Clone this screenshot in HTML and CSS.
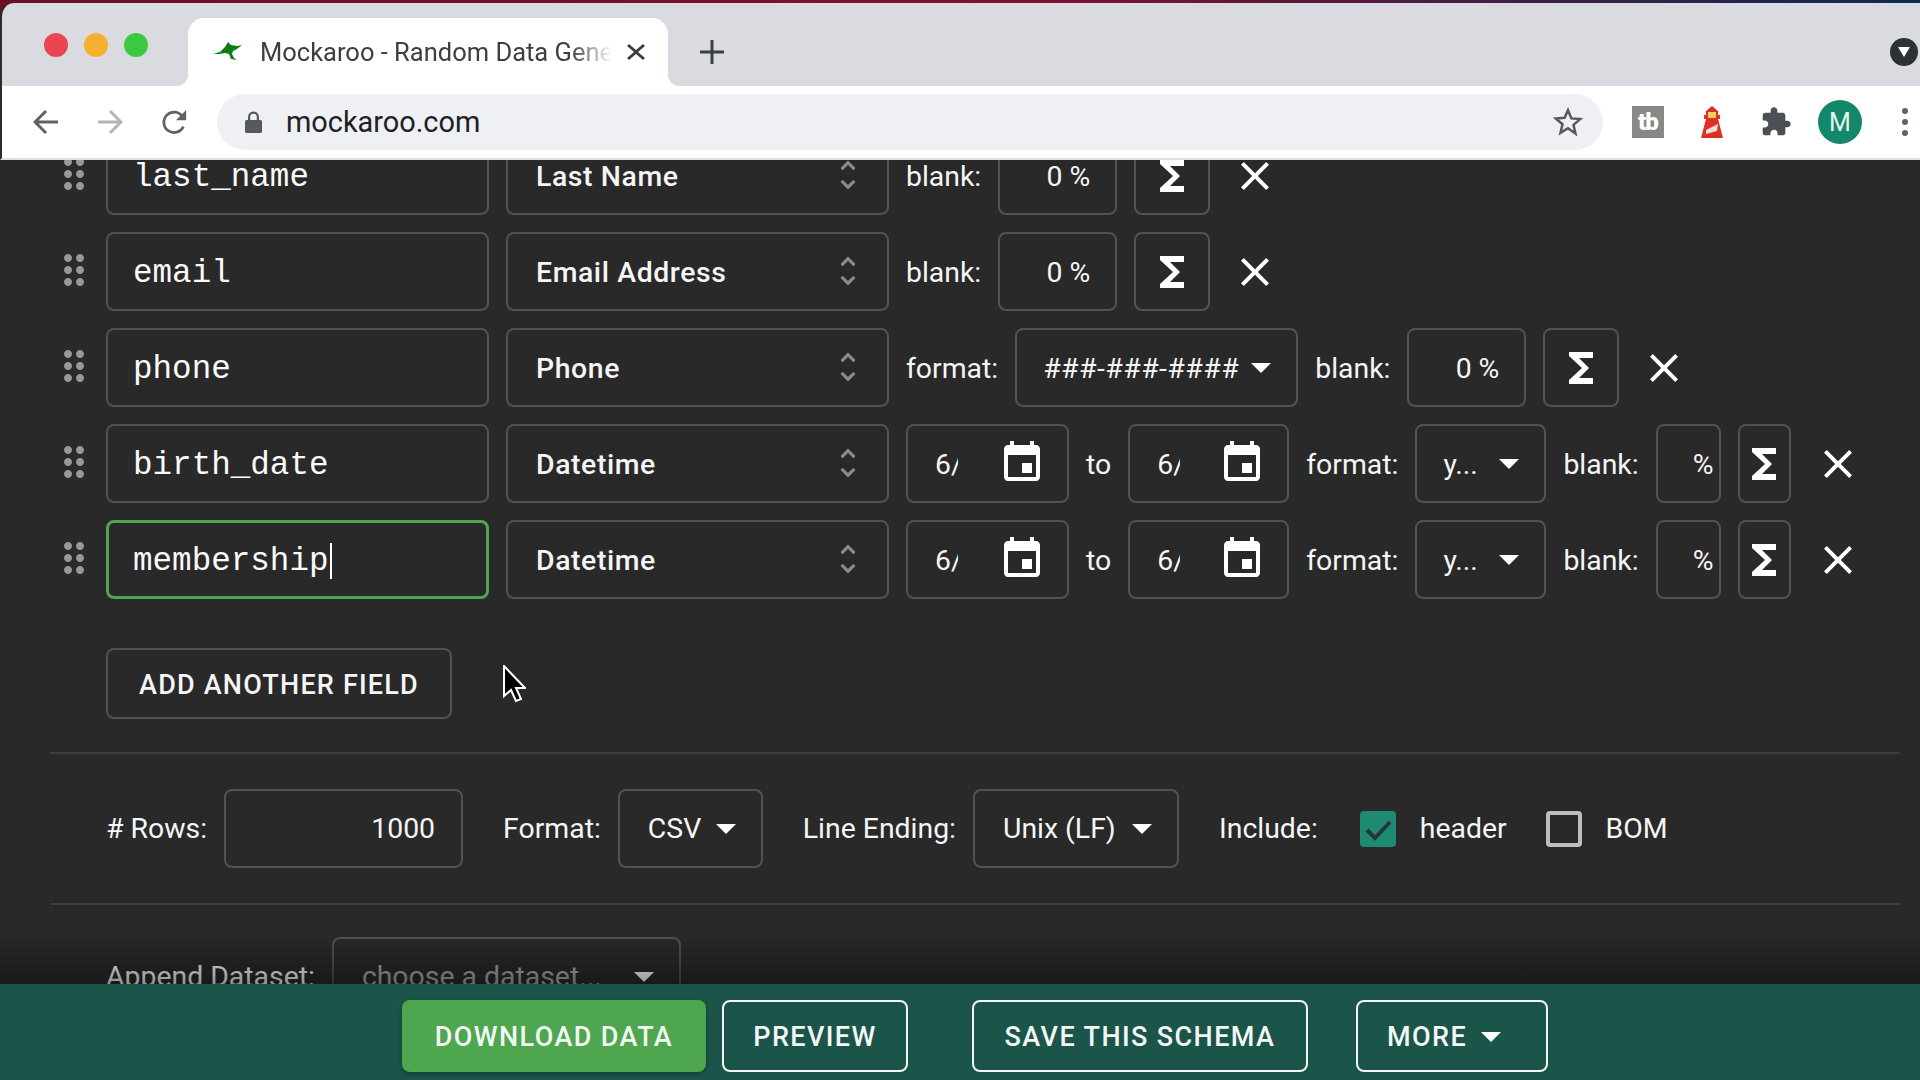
FILE: index.html
```html
<!DOCTYPE html>
<html lang="en">
<head>
    <meta charset="UTF-8">
    <title>Mockaroo - Random Data Generator</title>
    <link rel="stylesheet" href="styles.css">
</head>
<body>
    <svg class="defs" width="0" height="0">
        <symbol id="i-drag" viewBox="0 0 24 24"><path d="M11 18c0 1.1-.9 2-2 2s-2-.9-2-2 .9-2 2-2 2 .9 2 2zm-2-8c-1.1 0-2 .9-2 2s.9 2 2 2 2-.9 2-2-.9-2-2-2zm0-6c-1.1 0-2 .9-2 2s.9 2 2 2 2-.9 2-2-.9-2-2-2zm6 4c1.1 0 2-.9 2-2s-.9-2-2-2-2 .9-2 2 .9 2 2 2zm0 2c-1.1 0-2 .9-2 2s.9 2 2 2 2-.9 2-2-.9-2-2-2zm0 6c-1.1 0-2 .9-2 2s.9 2 2 2 2-.9 2-2-.9-2-2-2z"/></symbol>
        <symbol id="i-sum" viewBox="0 0 24 24"><path d="M18 4H6v2l6.5 6L6 18v2h12v-3h-7l5-5-5-5h7z"/></symbol>
        <symbol id="i-close" viewBox="0 0 24 24"><path d="M19 6.41L17.59 5 12 10.59 6.41 5 5 6.41 10.59 12 5 17.59 6.41 19 12 13.41 17.59 19 19 17.59 13.41 12z"/></symbol>
        <symbol id="i-event" viewBox="0 0 24 24"><path d="M17 12h-5v5h5v-5zM16 1v2H8V1H6v2H5c-1.11 0-1.99.9-1.99 2L3 19c0 1.1.89 2 2 2h14c1.1 0 2-.9 2-2V5c0-1.1-.9-2-2-2h-1V1h-2zm3 18H5V8h14v11z"/></symbol>
        <symbol id="i-drop" viewBox="0 0 24 24"><path d="M7 10l5 5 5-5z"/></symbol>
        <symbol id="i-unfold" viewBox="0 0 16 30"><path d="M8 0.500L0.500 8l2.200 2.200L8 4.900l5.300 5.300L15.500 8zM8 29.500l7.500-7.500-2.200-2.200L8 25.100l-5.300-5.300L0.500 22z"/></symbol>
    </svg>

    <div class="browser">
        <div class="tabstrip">
            <div class="lights">
                <span class="light red"></span>
                <span class="light amber"></span>
                <span class="light green"></span>
            </div>
            <div class="tab">
                <svg class="favicon" viewBox="0 0 30 20"><path d="M0 12l7-2 5-5 3-5 3 3 6 1 5-1-5 4-4 2-1 3 2 4 3 2-6-1-2-5-4-1-6 1z"/></svg>
                <span class="tab-title">Mockaroo - Random Data Generator</span>
                <svg class="tab-close" viewBox="0 0 18 16"><path d="M2 0l7 6 7-6 2 2-7 6 7 6-2 2-7-6-7 6-2-2 7-6-7-6z"/></svg>
            </div>
            <svg class="new-tab" viewBox="0 0 24 24"><path d="M10.5 0h3v10.5H24v3H13.5V24h-3V13.5H0v-3h10.5z"/></svg>
            <span class="tab-search"><svg viewBox="0 0 12 10"><path d="M0 0h12L6 10z"/></svg></span>
        </div>
        <div class="toolbar">
            <svg class="nav" viewBox="0 0 26 26"><path d="M25 13H3M13 2L2 13l11 11" fill="none" stroke-width="3"/></svg>
            <svg class="nav nav-off" viewBox="0 0 26 26"><path d="M1 13h22M13 2l11 11-11 11" fill="none" stroke-width="3"/></svg>
            <svg class="nav" viewBox="0 0 28 28"><path d="M23 19a11 11 0 1 1-1-11" fill="none" stroke-width="3"/><path d="M26 1v11H15z" class="solid"/></svg>
            <div class="omnibox">
                <svg class="lock" viewBox="0 0 17 22"><path d="M3 9V6a5.500 5.500 0 0 1 11 0v3h1.500A1.500 1.500 0 0 1 17 10.500v10a1.500 1.500 0 0 1-1.500 1.500h-14A1.500 1.500 0 0 1 0 20.500v-10A1.500 1.500 0 0 1 1.500 9zm2.200 0h6.600V6a3.300 3.300 0 0 0-6.600 0z"/></svg>
                <span class="url">mockaroo.com</span>
                <svg class="star" viewBox="0 0 24 24"><path d="M12 2.600l2.700 6.500 7 .6-5.300 4.600 1.600 6.900L12 17l-6 3.700 1.600-6.900-5.300-4.600 7-.6z" fill="none" stroke-width="2"/></svg>
            </div>
            <span class="ext-tb">tb</span>
            <svg class="ext-light" viewBox="0 0 22 32">
                <path d="M11 0l6 5v4h2v4h-2l5 19H0l5-19H3V9h2V5z" fill="#dc3027"/>
                <rect x="7" y="6" width="8" height="6" fill="#f6ce5c"/>
                <path d="M5 24l12-6-1 7-11 3z" fill="#f3dcd6"/>
            </svg>
            <svg class="ext-puzzle" viewBox="0 0 24 24"><path d="M20.500 11H19V7c0-1.100-.9-2-2-2h-4V3.500C13 2.120 11.880 1 10.500 1S8 2.120 8 3.500V5H4c-1.100 0-1.990.9-1.990 2v3.800H3.500c1.490 0 2.700 1.210 2.700 2.700s-1.210 2.700-2.700 2.700H2V20c0 1.100.9 2 2 2h3.800v-1.500c0-1.490 1.210-2.700 2.700-2.700 1.490 0 2.700 1.210 2.700 2.700V22H17c1.100 0 2-.9 2-2v-4h1.500c1.380 0 2.500-1.120 2.500-2.500S21.880 11 20.500 11z"/></svg>
            <span class="avatar">M</span>
            <span class="kebab"><i></i><i></i><i></i></span>
        </div>
    </div>

    <main class="page">
        <div class="fields">
            <div class="row">
                <svg class="drag"><use href="#i-drag"/></svg>
                <div class="box name">last_name</div>
                <div class="box type">Last Name<svg class="unfold"><use href="#i-unfold"/></svg></div>
                <span class="label">blank:</span>
                <div class="box blank">0 %</div>
                <div class="box sum"><svg><use href="#i-sum"/></svg></div>
                <svg class="remove"><use href="#i-close"/></svg>
            </div>
            <div class="row">
                <svg class="drag"><use href="#i-drag"/></svg>
                <div class="box name">email</div>
                <div class="box type">Email Address<svg class="unfold"><use href="#i-unfold"/></svg></div>
                <span class="label">blank:</span>
                <div class="box blank">0 %</div>
                <div class="box sum"><svg><use href="#i-sum"/></svg></div>
                <svg class="remove"><use href="#i-close"/></svg>
            </div>
            <div class="row">
                <svg class="drag"><use href="#i-drag"/></svg>
                <div class="box name">phone</div>
                <div class="box type">Phone<svg class="unfold"><use href="#i-unfold"/></svg></div>
                <span class="label">format:</span>
                <div class="box select phone-format">###-###-####<svg class="drop"><use href="#i-drop"/></svg></div>
                <span class="label">blank:</span>
                <div class="box blank">0 %</div>
                <div class="box sum"><svg><use href="#i-sum"/></svg></div>
                <svg class="remove"><use href="#i-close"/></svg>
            </div>
            <div class="row">
                <svg class="drag"><use href="#i-drag"/></svg>
                <div class="box name">birth_date</div>
                <div class="box type">Datetime<svg class="unfold"><use href="#i-unfold"/></svg></div>
                <div class="box date"><span class="date-text">6/12/2020</span><svg><use href="#i-event"/></svg></div>
                <span class="label">to</span>
                <div class="box date"><span class="date-text">6/12/2021</span><svg><use href="#i-event"/></svg></div>
                <span class="label">format:</span>
                <div class="box select date-format">y...<svg class="drop"><use href="#i-drop"/></svg></div>
                <span class="label">blank:</span>
                <div class="box blank narrow">%</div>
                <div class="box sum narrow"><svg><use href="#i-sum"/></svg></div>
                <svg class="remove"><use href="#i-close"/></svg>
            </div>
            <div class="row">
                <svg class="drag"><use href="#i-drag"/></svg>
                <div class="box name focused">membership<span class="caret"></span></div>
                <div class="box type">Datetime<svg class="unfold"><use href="#i-unfold"/></svg></div>
                <div class="box date"><span class="date-text">6/12/2020</span><svg><use href="#i-event"/></svg></div>
                <span class="label">to</span>
                <div class="box date"><span class="date-text">6/12/2021</span><svg><use href="#i-event"/></svg></div>
                <span class="label">format:</span>
                <div class="box select date-format">y...<svg class="drop"><use href="#i-drop"/></svg></div>
                <span class="label">blank:</span>
                <div class="box blank narrow">%</div>
                <div class="box sum narrow"><svg><use href="#i-sum"/></svg></div>
                <svg class="remove"><use href="#i-close"/></svg>
            </div>
        </div>

        <div class="box add-field">ADD ANOTHER FIELD</div>
        <hr class="divider">

        <div class="options">
            <span class="label"># Rows:</span>
            <div class="box rows-input">1000</div>
            <span class="label gap-left">Format:</span>
            <div class="box select opt-format">CSV<svg class="drop"><use href="#i-drop"/></svg></div>
            <span class="label gap-left">Line Ending:</span>
            <div class="box select opt-ending">Unix (LF)<svg class="drop"><use href="#i-drop"/></svg></div>
            <span class="label gap-left">Include:</span>
            <span class="check checked"><svg viewBox="0 0 36 36"><path d="M7 19l8 8L30 11" fill="none" stroke-width="4"/></svg></span>
            <span class="label check-label">header</span>
            <span class="check"></span>
            <span class="label check-label">BOM</span>
        </div>
        <hr class="divider second">

        <div class="append">
            <span class="label">Append Dataset:</span>
            <div class="box select dataset">choose a dataset...<svg class="drop"><use href="#i-drop"/></svg></div>
        </div>

        <div class="fade"></div>
        <svg class="pointer" viewBox="0 0 24 38"><path d="M2 1v30l7-6 5 11 5-2-5-11h9z" fill="#000" stroke="#fff" stroke-width="2"/></svg>
    </main>

    <footer class="actions">
        <div class="btn primary">DOWNLOAD DATA</div>
        <div class="btn preview">PREVIEW</div>
        <div class="btn save">SAVE THIS SCHEMA</div>
        <div class="btn more">MORE<svg class="drop"><use href="#i-drop"/></svg></div>
    </footer>
</body>
</html>
```

FILE: styles.css
```css
* {
    box-sizing: border-box;
}
html, body {
    margin: 0;
    height: 100%;
}
body {
    display: flex;
    flex-direction: column;
    height: 1080px;
    overflow: hidden;
    font-family: Roboto, "Liberation Sans", sans-serif;
    background: #292929;
    color: #f5f5f5;
}
.defs {
    position: absolute;
}

/* browser chrome */
.browser {
    flex: none;
    padding-top: 3px;
    background: linear-gradient(90deg, #6a1024, #7b1230 55%, #0d2a55);
}
.tabstrip {
    display: flex;
    align-items: flex-end;
    height: 83px;
    background: #d9dbe0;
    border-top-left-radius: 14px;
    border-left: 2px solid #2b2b2b;
}
.lights {
    display: flex;
    gap: 16px;
    align-self: flex-start;
    margin: 30px 0 0 42px;
}
.light {
    width: 24px;
    height: 24px;
    border-radius: 50%;
}
.red { background: #ec4452; }
.amber { background: #f5ae2d; }
.green { background: #3dc93f; }
.tab {
    position: relative;
    display: flex;
    align-items: center;
    width: 480px;
    height: 68px;
    margin-left: 40px;
    padding: 0 23px 0 25px;
    background: #fff;
    border-radius: 16px 16px 0 0;
}
.tab::before, .tab::after {
    content: "";
    position: absolute;
    bottom: 0;
    width: 12px;
    height: 12px;
}
.tab::before {
    left: -12px;
    background: radial-gradient(circle at 0 0, transparent 12px, #fff 12.5px);
}
.tab::after {
    right: -12px;
    background: radial-gradient(circle at 100% 0, transparent 12px, #fff 12.5px);
}
.favicon {
    flex: none;
    width: 30px;
    height: 20px;
    fill: #0b7d12;
}
.tab-title {
    flex: 1;
    margin-left: 17px;
    overflow: hidden;
    white-space: nowrap;
    font-size: 25.5px;
    color: #3c4043;
    -webkit-mask-image: linear-gradient(90deg, #000 88%, transparent 100%);
    mask-image: linear-gradient(90deg, #000 88%, transparent 100%);
}
.tab-close {
    flex: none;
    width: 18px;
    height: 16px;
    margin-left: 15px;
    fill: #3c4043;
}
.new-tab {
    width: 24px;
    height: 24px;
    margin: 0 0 22px 32px;
    fill: #3c4043;
}
.tab-search {
    display: flex;
    align-items: center;
    justify-content: center;
    width: 28px;
    height: 28px;
    margin: 0 0 20px auto;
    margin-right: 2px;
    border-radius: 50%;
    background: #2d3036;
}
.tab-search svg {
    width: 12px;
    height: 10px;
    fill: #fff;
}
.toolbar {
    display: flex;
    align-items: center;
    height: 74px;
    padding: 0 0 0 31px;
    background: #fff;
    border-bottom: 2px solid #dfe0e2;
    border-left: 2px solid #2b2b2b;
}
.nav {
    flex: none;
    width: 26px;
    height: 26px;
    margin-right: 12px;
    stroke: #5f6368;
    fill: #5f6368;
}
.nav:nth-child(2) {
    margin: 0 39px 0 0;
    stroke: #b3b5b8;
}
.nav:nth-child(1) {
    margin-right: 38px;
}
.nav .solid {
    stroke: none;
}
.omnibox {
    display: flex;
    align-items: center;
    width: 1386px;
    height: 56px;
    margin-left: 17px;
    padding: 0 20px 0 28px;
    background: #eef0f3;
    border-radius: 28px;
}
.lock {
    width: 17px;
    height: 22px;
    fill: #55585d;
}
.url {
    flex: 1;
    margin-left: 24px;
    font-size: 28.9px;
    color: #202124;
}
.star {
    width: 30px;
    height: 30px;
    stroke: #55585d;
}
.ext-tb {
    display: flex;
    align-items: center;
    justify-content: center;
    width: 32px;
    height: 32px;
    margin-left: 29px;
    background: #888;
    font-size: 24px;
    font-weight: 900;
    letter-spacing: -1px;
    color: #fff;
}
.ext-light {
    width: 22px;
    height: 32px;
    margin-left: 37px;
}
.ext-puzzle {
    width: 32px;
    height: 32px;
    margin-left: 37px;
    fill: #4c4f55;
}
.avatar {
    display: flex;
    align-items: center;
    justify-content: center;
    width: 44px;
    height: 44px;
    margin-left: 26px;
    border-radius: 50%;
    background: #12876a;
    font-size: 25px;
    color: #e6f4f0;
}
.kebab {
    display: flex;
    flex-direction: column;
    gap: 5px;
    margin-left: 40px;
}
.kebab i {
    width: 6px;
    height: 6px;
    border-radius: 50%;
    background: #5f6368;
}

/* page */
.page {
    position: relative;
    flex: 1;
    min-height: 0;
    overflow: hidden;
    font-size: 28.4px;
}
.fields {
    display: flex;
    flex-direction: column;
    gap: 17px;
    margin-top: -24px;
    padding-left: 50px;
}
.row {
    display: flex;
    align-items: center;
    gap: 17px;
    height: 79px;
}
.row .label, .row .box {
    padding-top: 1px;
}
.drag {
    flex: none;
    width: 48px;
    height: 48px;
    margin: -3px -9px 0 0;
    fill: #999;
}
.box {
    position: relative;
    display: flex;
    flex: none;
    align-items: center;
    height: 79px;
    border: 2px solid #525252;
    border-radius: 8px;
}
.label {
    flex: none;
    white-space: pre;
}
.row .name {
    width: 383px;
    padding-top: 3px;
    padding-left: 25px;
    font-family: "Liberation Mono", monospace;
    font-size: 32.6px;
    color: #fafafa;
}
.row .focused {
    border: 3px solid #4fa650;
    padding-left: 24px;
}
.caret {
    width: 2px;
    height: 36px;
    margin-left: 1px;
    background: #fff;
}
.type {
    width: 383px;
    padding-left: 28px;
    font-weight: 500;
    letter-spacing: 0.6px;
}
.unfold {
    position: absolute;
    top: 22px;
    right: 31px;
    width: 16px;
    height: 30px;
    fill: #8a8a8a;
}
.blank {
    justify-content: flex-end;
    width: 119px;
    padding-right: 25px;
}
.row .sum {
    justify-content: center;
    width: 76px;
    padding-top: 0;
}
.sum svg {
    width: 48px;
    height: 48px;
    fill: #fff;
}
.remove {
    flex: none;
    width: 48px;
    height: 48px;
    margin-left: 4px;
    fill: #fff;
}
.blank.narrow {
    width: 65px;
    padding-right: 5px;
}
.row .sum.narrow {
    width: 53px;
    margin-left: 0;
}
.sum.narrow + .remove {
    margin-left: 6px;
}
.select {
    padding-left: 28px;
}
.drop {
    position: absolute;
    top: 13px;
    right: 11px;
    width: 48px;
    height: 48px;
    fill: #fff;
}
.phone-format {
    width: 283px;
    padding-left: 26px;
    letter-spacing: 0.45px;
}
.date-format {
    width: 131px;
    padding-left: 26px;
}
.date {
    width: 163px;
    padding-left: 27px;
}
.row .date ~ .date {
    width: 161px;
}
.date-text {
    width: 23px;
    overflow: hidden;
    white-space: nowrap;
}
.date svg {
    position: absolute;
    top: 13px;
    right: 21px;
    width: 48px;
    height: 48px;
    fill: #fff;
}
.add-field {
    justify-content: center;
    width: 346px;
    height: 71px;
    margin: 49px 0 0 106px;
    padding-top: 2px;
    font-weight: 500;
    font-size: 27px;
    letter-spacing: 1.2px;
}
.divider {
    height: 2px;
    margin: 33px 20px 0 50px;
    border: 0;
    background: #3d3d3d;
}
.divider.second {
    margin-top: 35px;
}
.options {
    display: flex;
    align-items: center;
    gap: 17px;
    height: 79px;
    margin-top: 35px;
    padding-left: 106px;
}
.rows-input {
    justify-content: flex-end;
    width: 239px;
    padding-right: 26px;
}
.gap-left {
    margin-left: 23px;
}
.opt-format {
    width: 145px;
}
.opt-ending {
    width: 206px;
}
.check {
    flex: none;
    width: 36px;
    height: 36px;
    margin-left: 25px;
    border: 4px solid #bdbdbd;
    border-radius: 4px;
}
.check.checked {
    border: 0;
    background: #1e8a72;
    stroke: #27343a;
}
.check svg {
    display: block;
}
.check-label {
    margin-left: 7px;
    margin-right: -3px;
}
.append {
    display: flex;
    align-items: center;
    gap: 17px;
    margin-top: 32px;
    padding-left: 106px;
}
.dataset {
    width: 349px;
    color: #a8a8a8;
}
.fade {
    position: absolute;
    right: 0;
    bottom: 0;
    left: 0;
    height: 50px;
    background: linear-gradient(rgba(0, 0, 0, 0), rgba(0, 0, 0, 0.4));
}
.pointer {
    position: absolute;
    top: 505px;
    left: 502px;
    width: 24px;
    height: 38px;
}

/* bottom bar */
.actions {
    display: flex;
    flex: none;
    align-items: flex-start;
    height: 96px;
    padding: 16px 0 0 402px;
    background: #1b5449;
}
.btn {
    position: relative;
    display: flex;
    align-items: center;
    justify-content: center;
    height: 72px;
    padding-top: 2px;
    border: 2.5px solid #f2f7f5;
    border-radius: 8px;
    font-size: 27px;
    font-weight: 500;
    letter-spacing: 1.4px;
    color: #f2f7f5;
}
.primary {
    width: 304px;
    margin-right: 16px;
    border: 0;
    background: #4ea64f;
    box-shadow: 0 2px 4px rgba(0, 0, 0, 0.3);
}
.preview {
    width: 186px;
    margin-right: 64px;
}
.save {
    width: 336px;
    margin-right: 48px;
}
.more {
    justify-content: flex-start;
    width: 192px;
    padding-left: 29px;
}
.more .drop {
    top: 10px;
    right: 31px;
}
```
